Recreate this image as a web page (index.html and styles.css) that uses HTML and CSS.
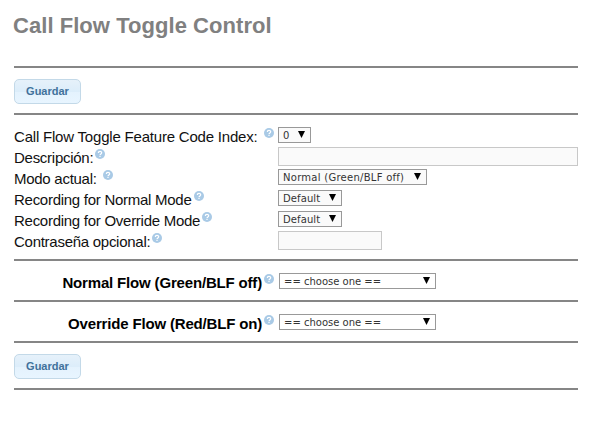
FILE: index.html
```html
<!DOCTYPE html>
<html lang="es">
<head>
    <meta charset="UTF-8">
    <meta name="viewport" content="width=device-width, initial-scale=1.0">
    <title>Call Flow Toggle Control</title>
    <link rel="stylesheet" href="styles.css">
</head>
<body>

<svg class="sprite" width="0" height="0">
    <symbol id="help" viewBox="0 0 10 10">
        <circle cx="5" cy="5" r="5" fill="#a9cae6"/>
        <path d="M3.3 3.9C3.3 1.8 6.7 1.8 6.7 3.8C6.7 4.9 5 4.9 5 6.2M5 7V8.1" fill="none" stroke="#fff" stroke-width="1.2"/>
    </symbol>
</svg>

<form class="container">
    <h1>Call Flow Toggle Control</h1>

    <div class="actions">
        <button type="button">Guardar</button>
    </div>

    <div class="fields">
        <div class="row">
            <label for="fc"><span>Call Flow Toggle Feature Code Index:</span><svg class="help spaced"><use href="#help"/></svg></label>
            <div class="select w-index"><select id="fc"><option>0</option></select></div>
        </div>
        <div class="row">
            <label for="dest" class="tight"><span>Descripción:</span><svg class="help"><use href="#help"/></svg></label>
            <input type="text" id="dest">
        </div>
        <div class="row">
            <label for="mode" class="tight"><span>Modo actual:</span><svg class="help spaced"><use href="#help"/></svg></label>
            <div class="select w-mode"><select id="mode"><option>Normal (Green/BLF off)</option></select></div>
        </div>
        <div class="row">
            <label for="rec-normal" class="tight"><span>Recording for Normal Mode</span><svg class="help"><use href="#help"/></svg></label>
            <div class="select w-rec"><select id="rec-normal"><option>Default</option></select></div>
        </div>
        <div class="row">
            <label for="rec-override" class="tight"><span>Recording for Override Mode</span><svg class="help"><use href="#help"/></svg></label>
            <div class="select w-rec"><select id="rec-override"><option>Default</option></select></div>
        </div>
        <div class="row">
            <label for="password" class="tight"><span>Contraseña opcional:</span><svg class="help"><use href="#help"/></svg></label>
            <input type="text" id="password" class="short">
        </div>
    </div>

    <div class="flow">
        <label for="goto0"><span>Normal Flow (Green/BLF off)</span><svg class="help"><use href="#help"/></svg></label>
        <div class="select w-flow"><select id="goto0"><option>== choose one ==</option></select></div>
    </div>

    <div class="flow">
        <label for="goto1"><span>Override Flow (Red/BLF on)</span><svg class="help"><use href="#help"/></svg></label>
        <div class="select w-flow"><select id="goto1"><option>== choose one ==</option></select></div>
    </div>

    <div class="actions last">
        <button type="button">Guardar</button>
    </div>
</form>

</body>
</html>
```
FILE: styles.css
```css
* {
    box-sizing: border-box;
    margin: 0;
    padding: 0;
}

body {
    font-family: "Liberation Sans", Arial, sans-serif;
    font-size: 15px;
    background: #fff;
    color: #111;
}

.sprite {
    display: block;
}

.container {
    width: 564px;
    margin-left: 14px;
}

h1 {
    height: 66px;
    padding-top: 12px;
    margin-left: -1px;
    font-size: 22px;
    line-height: 27px;
    letter-spacing: 0.05px;
    color: #808080;
}

/* Buttons */
.actions {
    height: 47px;
    padding-top: 11px;
    border-top: 2px solid #868686;
}

.actions.last {
    height: 49px;
    border-bottom: 2px solid #868686;
}

button {
    display: block;
    width: 67px;
    height: 25px;
    padding-bottom: 1px;
    font-family: inherit;
    font-size: 11px;
    font-weight: bold;
    color: #41719b;
    border: 1px solid #c3d9e8;
    border-radius: 5px;
    background: linear-gradient(#e6f1fa, #dcedfa 50%, #e4f2fd 51%, #e8f5ff);
}

/* Form rows */
.fields {
    height: 146px;
    padding-top: 9px;
    border-top: 2px solid #868686;
}

.row {
    display: grid;
    grid-template-columns: 264px 1fr;
    align-items: center;
    height: 21px;
}

label {
    display: flex;
    align-items: center;
    line-height: 21px;
    letter-spacing: -0.2px;
    white-space: nowrap;
}

label.tight {
    letter-spacing: -0.27px;
}

.row label span {
    padding-top: 2px;
}

.help {
    flex-shrink: 0;
    width: 10px;
    height: 10px;
    margin-left: 2px;
    margin-bottom: 5px;
}

.help.spaced {
    margin-left: 6px;
}

input {
    width: 300px;
    height: 19px;
    border: 1px solid #c8c8c8;
    background: #fafafa;
}

input.short {
    width: 104px;
}

.select {
    position: relative;
    height: 16px;
}

.row .select {
    margin-bottom: 1px;
}

.select::after {
    content: "";
    position: absolute;
    right: 6px;
    top: 4px;
    width: 7px;
    height: 7px;
    background: #000;
    clip-path: polygon(0 0, 100% 0, 50% 100%);
    pointer-events: none;
}

select {
    display: block;
    appearance: none;
    width: 100%;
    height: 16px;
    padding-left: 4px;
    font-family: "DejaVu Sans", Verdana, sans-serif;
    font-size: 10px;
    color: #333;
    border: 1px solid #999;
    border-radius: 0;
    background: #fff;
}

.row select {
    background: #fafafa;
}

.w-index {
    width: 33px;
}

.w-mode {
    width: 149px;
}

.w-mode select {
    letter-spacing: 0.27px;
}

.w-rec {
    width: 64px;
}

.w-rec select {
    letter-spacing: 0.1px;
}

.w-flow {
    width: 157px;
}

/* Flow destinations */
.flow {
    display: grid;
    grid-template-columns: 265px 1fr;
    height: 41px;
    padding-top: 12px;
    border-top: 2px solid #868686;
    font-weight: bold;
    color: #000;
}

.flow label {
    justify-content: flex-end;
    height: 19px;
    padding-right: 5px;
    letter-spacing: -0.17px;
}

.flow .help {
    margin-bottom: 7px;
}
```
